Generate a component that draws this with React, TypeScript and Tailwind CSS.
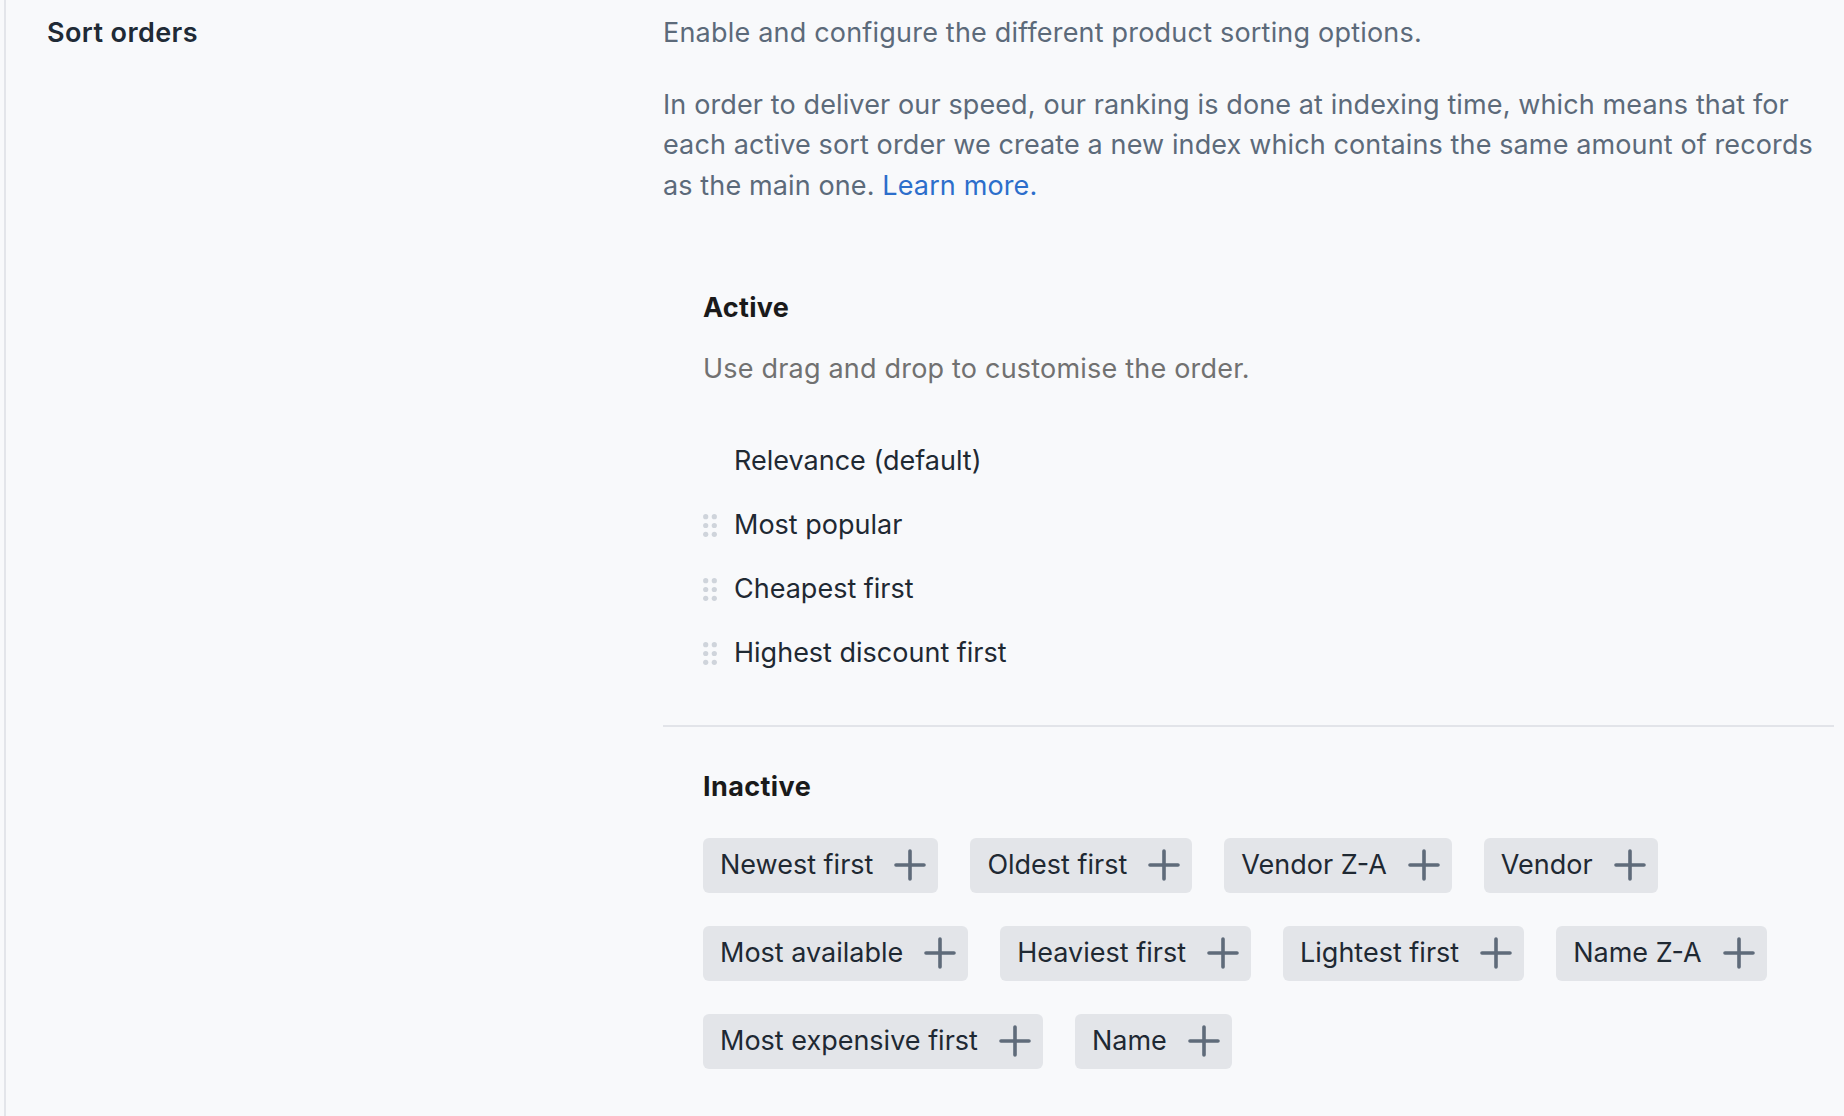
import React from "react";

const activeOrders = [
  { label: "Relevance (default)", draggable: false },
  { label: "Most popular", draggable: true },
  { label: "Cheapest first", draggable: true },
  { label: "Highest discount first", draggable: true },
];

const inactiveOrders = [
  "Newest first",
  "Oldest first",
  "Vendor Z-A",
  "Vendor",
  "Most available",
  "Heaviest first",
  "Lightest first",
  "Name Z-A",
  "Most expensive first",
  "Name",
];

function DragHandle() {
  return (
    <svg width="15" height="23" viewBox="0 0 15 23" className="fill-[#cfd4db]">
      <circle cx="2.7" cy="2.7" r="2.6" />
      <circle cx="11.3" cy="2.7" r="2.6" />
      <circle cx="2.7" cy="11.5" r="2.6" />
      <circle cx="11.3" cy="11.5" r="2.6" />
      <circle cx="2.7" cy="20.3" r="2.6" />
      <circle cx="11.3" cy="20.3" r="2.6" />
    </svg>
  );
}

function PlusIcon() {
  return (
    <svg
      width="32"
      height="32"
      viewBox="0 0 32 32"
      fill="none"
      className="stroke-[#5f6b7a]"
      strokeWidth="3.6"
      strokeLinecap="round"
    >
      <path d="M2 16h28M16 2v28" />
    </svg>
  );
}

export default function App() {
  return (
    <div className="min-h-screen bg-[#f8f9fb] pl-[4px] font-['Inter',sans-serif] text-[27px] leading-[40.5px]">
      <div className="flex min-h-screen border-l-2 border-[#e3e5ea]">
        {/* left column */}
        <div className="w-[657px] shrink-0 pl-[41px] pt-[13px]">
          <h2 className="font-semibold tracking-[0.4px] text-[#202a36]">Sort orders</h2>
        </div>

        {/* right column */}
        <div className="flex-1 pr-[10px] pt-[13px]">
          <p className="tracking-[0.2px] text-[#5c6a7a]">
            Enable and configure the different product sorting options.
          </p>
          <p className="mt-[31px] tracking-[0.12px] text-[#5c6a7a]">
            In order to deliver our speed, our ranking is done at indexing time, which means that for
            each active sort order we create a new index which contains the same amount of records
            as the main one. <a href="#" className="text-[#2c6ecb]">Learn more.</a>
          </p>

          <div className="mt-[82px] pl-[40px]">
            <h3 className="font-bold tracking-[0.3px] text-[#1a1a1a]">Active</h3>
            <p className="mt-[20px] tracking-[0.2px] text-[#717171]">
              Use drag and drop to customise the order.
            </p>
            <ul className="mt-[40px]">
              {activeOrders.map((o) => (
                <li key={o.label} className="flex h-[64px] items-center text-[#1f2933]">
                  <span className="flex w-[31px] shrink-0 items-center">
                    {o.draggable && <DragHandle />}
                  </span>
                  {o.label}
                </li>
              ))}
            </ul>
          </div>

          <div className="mt-[40px] h-[2px] bg-[#e2e4e9]" />

          <div className="mt-[40px] pl-[40px]">
            <h3 className="font-bold tracking-[0.4px] text-[#1a1a1a]">Inactive</h3>
            <div className="mt-[30px] flex flex-wrap gap-x-[32px] gap-y-[33px]">
              {inactiveOrders.map((name) => (
                <button
                  key={name}
                  className="flex h-[55px] items-center gap-[21px] rounded-[6px] bg-[#e3e5e9] pl-[17px] pr-[12px] text-[#1f2933]"
                >
                  {name}
                  <PlusIcon />
                </button>
              ))}
            </div>
          </div>
        </div>
      </div>
    </div>
  );
}
